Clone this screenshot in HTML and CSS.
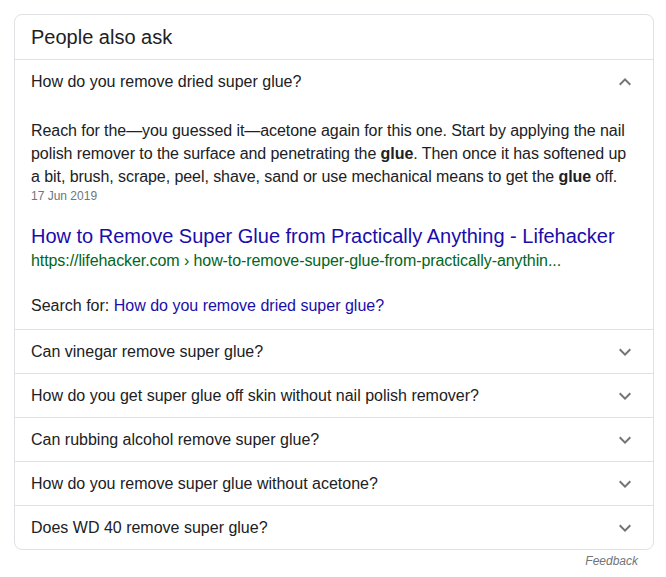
FILE: index.html
```html
<!DOCTYPE html>
<html>
<head>
<meta charset="utf-8">
<link rel="stylesheet" href="styles.css">
</head>
<body>
<div class="wrap">
  <div class="card">
    <div class="card-head">People also ask</div>
    <div class="q q-open">
      <span>How do you remove dried super glue?</span>
      <svg class="chev" width="24" height="24" viewBox="0 0 24 24"><path d="M7.41 15.41 12 10.83l4.59 4.58L18 14l-6-6-6 6z"/></svg>
    </div>
    <div class="answer">
      <p class="ans-text">Reach for the—you guessed it—acetone again for this one. Start by applying the nail polish remover to the surface and penetrating the <b>glue</b>. Then once it has softened up a bit, brush, scrape, peel, shave, sand or use mechanical means to get the <b>glue</b> off.</p>
      <div class="date">17 Jun 2019</div>
      <a class="res-title" href="#">How to Remove Super Glue from Practically Anything - Lifehacker</a>
      <div class="res-url">https://lifehacker.com › how-to-remove-super-glue-from-practically-anythin...</div>
      <div class="search-for">Search for: <a href="#">How do you remove dried super glue?</a></div>
    </div>
    <div class="q">
      <span>Can vinegar remove super glue?</span>
      <svg class="chev" width="24" height="24" viewBox="0 0 24 24"><path d="M16.59 8.59 12 13.17 7.41 8.59 6 10l6 6 6-6z"/></svg>
    </div>
    <div class="q">
      <span>How do you get super glue off skin without nail polish remover?</span>
      <svg class="chev" width="24" height="24" viewBox="0 0 24 24"><path d="M16.59 8.59 12 13.17 7.41 8.59 6 10l6 6 6-6z"/></svg>
    </div>
    <div class="q">
      <span>Can rubbing alcohol remove super glue?</span>
      <svg class="chev" width="24" height="24" viewBox="0 0 24 24"><path d="M16.59 8.59 12 13.17 7.41 8.59 6 10l6 6 6-6z"/></svg>
    </div>
    <div class="q">
      <span>How do you remove super glue without acetone?</span>
      <svg class="chev" width="24" height="24" viewBox="0 0 24 24"><path d="M16.59 8.59 12 13.17 7.41 8.59 6 10l6 6 6-6z"/></svg>
    </div>
    <div class="q">
      <span>Does WD 40 remove super glue?</span>
      <svg class="chev" width="24" height="24" viewBox="0 0 24 24"><path d="M16.59 8.59 12 13.17 7.41 8.59 6 10l6 6 6-6z"/></svg>
    </div>
  </div>
  <div class="feedback">Feedback</div>
</div>
</body>
</html>
```
FILE: styles.css
```css
html, body {
  margin: 0;
  padding: 0;
  background: #fff;
}
body {
  font-family: "Liberation Sans", Arial, sans-serif;
  color: #202124;
}
.wrap {
  padding: 14px 12px 0 14px;
}
.card {
  border: 1px solid #dfe1e5;
  border-radius: 8px;
  overflow: hidden;
}
.card-head {
  height: 44px;
  display: flex;
  align-items: center;
  padding-left: 16px;
  font-size: 20px;
  border-bottom: 1px solid #dfe1e5;
}
.q {
  height: 43px;
  display: flex;
  align-items: center;
  justify-content: space-between;
  padding: 0 16px 0 16px;
  font-size: 16px;
  border-top: 1px solid #dfe1e5;
}
.q-open {
  border-top: none;
  height: 44px;
}
.chev {
  fill: #70757a;
  display: block;
  flex: none;
}
.answer {
  padding: 15px 16px 12px 16px;
}
.ans-text {
  margin: 0;
  font-size: 16px;
  line-height: 23px;
  letter-spacing: -0.07px;
}
.ans-text b {
  font-weight: bold;
}
.date {
  font-size: 12px;
  line-height: 16px;
  color: #70757a;
}
.res-title {
  display: block;
  margin-top: 19px;
  font-size: 20px;
  line-height: 26px;
  color: #1a0dab;
  text-decoration: none;
}
.res-url {
  font-size: 16px;
  line-height: 24px;
  color: #006621;
  letter-spacing: -0.08px;
}
.search-for {
  margin-top: 22px;
  font-size: 16px;
  line-height: 22px;
}
.search-for a {
  color: #1a0dab;
  text-decoration: none;
}
.feedback {
  text-align: right;
  padding: 3px 16px 0 0;
  font-size: 12px;
  line-height: 16px;
  font-style: italic;
  color: #70757a;
}
```
